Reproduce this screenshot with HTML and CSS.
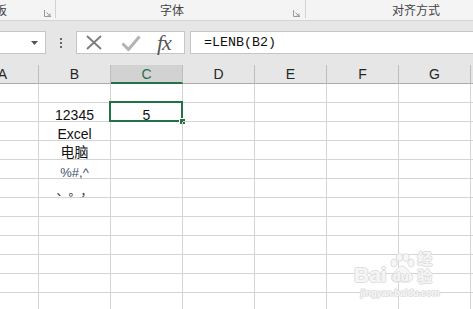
FILE: index.html
```html
<!DOCTYPE html>
<html lang="zh">
<head>
<meta charset="utf-8">
<link rel="stylesheet" href="styles.css">
</head>
<body>
<div class="ribbon">
  <div class="grp g1"><span class="glabel l1">板</span><svg class="launch" viewBox="0 0 7 7" width="7" height="7"><path d="M0.5 0v6.5H7" fill="none" stroke="#9a9a9a"/><path d="M2.5 2.5l3.5 3.5M6 3.5v2.5H3.5" fill="none" stroke="#9a9a9a"/></svg></div>
  <div class="grp g2"><span class="glabel l2">字体</span><svg class="launch" viewBox="0 0 7 7" width="7" height="7"><path d="M0.5 0v6.5H7" fill="none" stroke="#9a9a9a"/><path d="M2.5 2.5l3.5 3.5M6 3.5v2.5H3.5" fill="none" stroke="#9a9a9a"/></svg></div>
  <div class="grp g3"><span class="glabel l3">对齐方式</span></div>
</div>
<div class="fbar">
  <div class="namebox"><svg class="caret" viewBox="0 0 7 4" width="7" height="4"><path d="M0 0h7L3.5 4z" fill="#555"/></svg></div>
  <div class="dots"><i></i><i></i><i></i></div>
  <div class="fbtns">
    <svg class="ico-x" viewBox="0 0 16 15" width="16" height="15"><path d="M1 1l14 13M15 1L1 14" stroke="#7b7b7b" stroke-width="1.8" fill="none"/></svg>
    <svg class="ico-check" viewBox="0 0 20 16" width="20" height="16"><path d="M1.5 8.5l6 6L18.5 1.5" stroke="#b3b3b3" stroke-width="3" fill="none"/></svg>
    <span class="fx">fx</span>
  </div>
  <div class="finput">=LENB(B2)</div>
</div>
<div class="sheet">
  <div class="row hdr">
    <div class="hc">A</div><div class="hc">B</div><div class="hc sel">C</div><div class="hc">D</div><div class="hc">E</div><div class="hc">F</div><div class="hc">G</div><div class="hc">H</div>
  </div>
  <div class="row"><div class="c"></div><div class="c"></div><div class="c"></div><div class="c"></div><div class="c"></div><div class="c"></div><div class="c"></div><div class="c"></div></div>
  <div class="row"><div class="c"></div><div class="c">12345</div><div class="c active">5<span class="selbox"></span><span class="handle"></span></div><div class="c"></div><div class="c"></div><div class="c"></div><div class="c"></div><div class="c"></div></div>
  <div class="row"><div class="c"></div><div class="c">Excel</div><div class="c"></div><div class="c"></div><div class="c"></div><div class="c"></div><div class="c"></div><div class="c"></div></div>
  <div class="row"><div class="c"></div><div class="c cjk">电脑</div><div class="c"></div><div class="c"></div><div class="c"></div><div class="c"></div><div class="c"></div><div class="c"></div></div>
  <div class="row"><div class="c"></div><div class="c sym">%#,^</div><div class="c"></div><div class="c"></div><div class="c"></div><div class="c"></div><div class="c"></div><div class="c"></div></div>
  <div class="row"><div class="c"></div><div class="c punct">、。，</div><div class="c"></div><div class="c"></div><div class="c"></div><div class="c"></div><div class="c"></div><div class="c"></div></div>
  <div class="row"><div class="c"></div><div class="c"></div><div class="c"></div><div class="c"></div><div class="c"></div><div class="c"></div><div class="c"></div><div class="c"></div></div>
  <div class="row"><div class="c"></div><div class="c"></div><div class="c"></div><div class="c"></div><div class="c"></div><div class="c"></div><div class="c"></div><div class="c"></div></div>
  <div class="row"><div class="c"></div><div class="c"></div><div class="c"></div><div class="c"></div><div class="c"></div><div class="c"></div><div class="c"></div><div class="c"></div></div>
  <div class="row"><div class="c"></div><div class="c"></div><div class="c"></div><div class="c"></div><div class="c"></div><div class="c"></div><div class="c"></div><div class="c"></div></div>
  <div class="row"><div class="c"></div><div class="c"></div><div class="c"></div><div class="c"></div><div class="c"></div><div class="c"></div><div class="c"></div><div class="c"></div></div>
  <div class="row"><div class="c"></div><div class="c"></div><div class="c"></div><div class="c"></div><div class="c"></div><div class="c"></div><div class="c"></div><div class="c"></div></div>
</div>
<div class="watermark">
  <div class="wm-top">
    <span class="wm-bai">Bai</span>
    <span class="wm-du">
      <svg class="paw" viewBox="0 0 30 30" width="30" height="30">
        <g fill="#f6f6f6" stroke="#dedede" stroke-width="1">
          <ellipse cx="7" cy="10" rx="3.2" ry="4"/>
          <ellipse cx="12.5" cy="4.5" rx="3.2" ry="4"/>
          <ellipse cx="19" cy="4.5" rx="3.2" ry="4"/>
          <ellipse cx="24" cy="10" rx="3.2" ry="4"/>
          <path d="M15 13c-4 0-7 6-10 9c-2 3 0 7 4 7h12c4 0 6-4 4-7c-3-3-6-9-10-9z"/>
        </g>
      </svg>
      <span class="du-t">du</span>
    </span>
    <span class="wm-jy">经验</span>
  </div>
  <div class="wm-url">jingyan.baidu.com</div>
</div>
</body>
</html>
```
FILE: styles.css
```css
* { box-sizing: border-box; }
html, body { margin: 0; padding: 0; }
body {
  width: 473px;
  height: 309px;
  overflow: hidden;
  position: relative;
  background: #ffffff;
  font-family: "Liberation Sans", Arial, sans-serif;
}

/* ribbon labels */
.ribbon {
  display: flex;
  height: 21px;
  background: #f4f4f4;
  border-bottom: 1px solid #d4d4d4;
}
.grp {
  display: flex;
  align-items: center;
  height: 18px;
  border-right: 1px solid #d2d2d2;
  position: relative;
}
.g1 { width: 56px; padding-right: 4px; }
.g2 { width: 250px; padding-right: 5px; }
.g3 { flex: 1; border-right: none; }
.glabel {
  font-family: "Noto Sans CJK SC", sans-serif;
  font-size: 12px;
  color: #444;
  line-height: 20px;
  margin-top: 2px;
}
.l1 { margin-left: -5px; }
.l2 { margin-left: 104px; }
.l3 { margin-left: 86px; }
.launch { margin-left: auto; align-self: flex-end; margin-bottom: 1px; }

/* formula bar */
.fbar {
  display: flex;
  align-items: flex-start;
  height: 44px;
  padding-top: 10px;
  background: #e6e6e6;
}
.namebox {
  width: 56px;
  height: 23px;
  margin-left: -10px;
  background: #fff;
  border: 1px solid #c6c6c6;
  display: flex;
  align-items: center;
  justify-content: flex-end;
  padding-right: 7px;
}
.caret { display: block; }
.dots {
  width: 2px;
  margin-left: 14px;
  margin-top: 7px;
  display: flex;
  flex-direction: column;
  gap: 2px;
}
.dots i { display: block; width: 2px; height: 2px; background: #666; }
.fbtns {
  width: 109px;
  height: 23px;
  margin-left: 14px;
  background: #fff;
  border: 1px solid #c6c6c6;
  display: flex;
  align-items: center;
  padding-left: 9px;
}
.ico-x { display: block; }
.ico-check { display: block; margin-left: 19px; }
.fx {
  margin-left: 16px;
  font-family: "Liberation Serif", "DejaVu Serif", serif;
  font-style: italic;
  font-size: 22px;
  color: #555;
  line-height: 20px;
  letter-spacing: -1px;
}
.finput {
  flex: 1;
  height: 23px;
  margin-left: 5px;
  margin-right: -10px;
  background: #fff;
  border: 1px solid #c6c6c6;
  padding-left: 13px;
  font-family: "Liberation Mono", monospace;
  font-size: 13.33px;
  line-height: 21px;
  color: #111;
}

/* sheet */
.sheet {
  margin-left: -33px;
  background: #fff;
}
.row { display: flex; }
.hc {
  flex: 0 0 72px;
  height: 19px;
  background: #e6e6e6;
  border-right: 1px solid #bdbdbd;
  border-bottom: 1px solid #ababab;
  text-align: center;
  font-size: 14px;
  line-height: 19px;
  color: #262626;
}
.hc.sel {
  background: #d2d2d2;
  color: #217346;
  border-bottom: 2px solid #217346;
}
.c {
  flex: 0 0 72px;
  height: 19px;
  border-right: 1px solid #d4d4d4;
  border-bottom: 1px solid #d4d4d4;
  display: flex;
  align-items: flex-end;
  justify-content: center;
  font-size: 14px;
  line-height: 11px;
  color: #111;
  position: relative;
}
.c.cjk {
  font-family: "Noto Sans CJK SC", sans-serif;
  font-size: 14px;
  line-height: 16px;
}
.c.sym {
  font-size: 13px;
  color: #44506a;
  line-height: 11px;
}
.c.punct {
  font-family: "Noto Sans CJK SC", sans-serif;
  font-size: 12px;
  line-height: 12px;
  color: #333;
  letter-spacing: 6px;
  padding-left: 6px;
}
.selbox {
  position: absolute;
  top: -2px;
  left: -2px;
  right: -1px;
  bottom: -1px;
  border: 2px solid #217346;
}
.handle {
  position: absolute;
  right: -4px;
  bottom: -4px;
  width: 7px;
  height: 7px;
  background: #217346;
  border: 1px solid #fff;
}

/* watermark */
.watermark {
  position: absolute;
  left: 354px;
  top: 252px;
  width: 92px;
}
.wm-top { display: flex; align-items: flex-end; height: 33px; }
.wm-bai, .du-t, .wm-jy, .wm-url {
  color: #f6f6f6;
  text-shadow: 1px 0 0 #dedede, -1px 0 0 #dedede, 0 1px 0 #dedede, 0 -1px 0 #dedede;
  font-weight: bold;
}
.wm-bai { font-size: 21px; line-height: 20px; }
.wm-du { position: relative; width: 30px; height: 32px; }
.paw { position: absolute; left: 0; top: 0; }
.du-t {
  position: absolute;
  left: 6px;
  bottom: 1px;
  font-size: 13px;
  line-height: 14px;
}
.wm-jy {
  font-family: "Noto Sans CJK SC", sans-serif;
  font-size: 15px;
  line-height: 18px;
  margin-left: 2px;
}
.wm-url {
  font-size: 9px;
  line-height: 12px;
  margin-top: 2px;
  text-align: center;
}
```
